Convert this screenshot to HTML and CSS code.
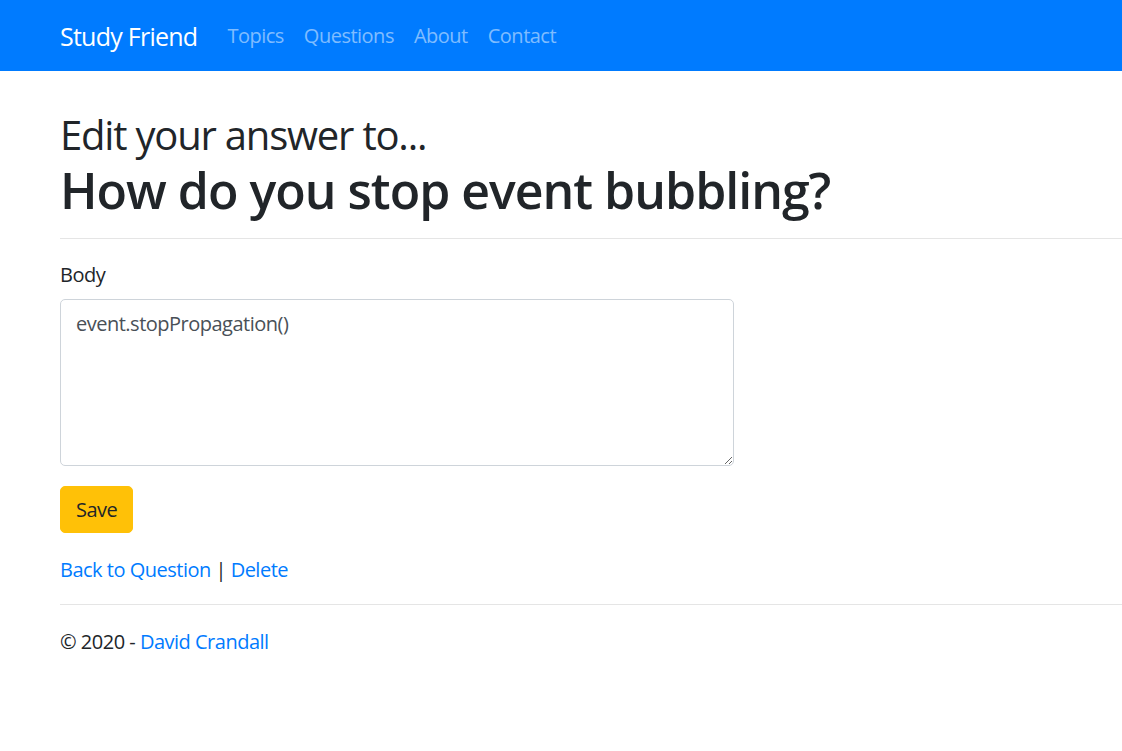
FILE: index.html
```html
<!DOCTYPE html>
<html lang="en">
<head>
<meta charset="utf-8">
<title>Edit answer - Study Friend</title>
<link rel="stylesheet" href="styles.css">
</head>
<body>
<header class="navbar">
  <a class="brand" href="#">Study Friend</a>
  <nav class="nav">
    <a class="nav-link" href="#">Topics</a>
    <a class="nav-link" href="#">Questions</a>
    <a class="nav-link" href="#">About</a>
    <a class="nav-link" href="#">Contact</a>
  </nav>
</header>
<main class="container">
  <h2 class="subtitle">Edit your answer to...</h2>
  <h1 class="title">How do you stop event bubbling?</h1>
  <hr class="rule">
  <form class="form">
    <div class="form-group">
      <label class="label" for="body">Body</label>
      <textarea id="body" class="textarea">event.stopPropagation()</textarea>
    </div>
    <button type="button" class="btn-save">Save</button>
  </form>
  <p class="links"><a href="#">Back to Question</a> | <a href="#">Delete</a></p>
  <hr class="rule rule-footer">
  <footer class="footer">© 2020 - <a href="#">David Crandall</a></footer>
</main>
</body>
</html>
```

FILE: styles.css
```css
* { box-sizing: border-box; }
html, body {
  margin: 0;
  padding: 0;
  background: #fff;
}
body {
  font-family: "Open Sans", "Noto Sans", sans-serif;
  font-size: 20px;
  line-height: 30px;
  color: #212529;
  letter-spacing: -0.5px;
}
a { color: #007bff; text-decoration: none; }

.navbar {
  height: 71px;
  background: #007bff;
  display: flex;
  align-items: center;
  padding: 0 60px;
}
.brand {
  color: #fff;
  font-size: 25px;
  line-height: 30px;
  margin-right: 20px;
  letter-spacing: -0.75px;
}
.nav { display: flex; }
.nav-link {
  color: rgba(255,255,255,.5);
  padding: 0 10px;
  font-size: 20px;
}

.container {
  padding: 40px 0 40px 60px;
}
.subtitle {
  margin: 0;
  font-size: 40px;
  line-height: 48px;
  font-weight: 400;
  letter-spacing: -1.2px;
}
.title {
  margin: 1px 0 0;
  font-size: 50px;
  line-height: 60px;
  font-weight: 600;
  letter-spacing: -1px;
}
.rule {
  margin: 18px 0 21px;
  border: 0;
  border-top: 1px solid rgba(0,0,0,.1);
}
.rule-footer { margin: 19px 0 22px; }
.form-group { margin-bottom: 20px; }
.label {
  display: block;
  margin-bottom: 9px;
}
.textarea {
  display: block;
  width: 674px;
  height: 167px;
  padding: 9px 15px;
  border: 1px solid #ced4da;
  border-radius: 5px;
  font-family: inherit;
  font-size: 20px;
  line-height: 30px;
  letter-spacing: -0.5px;
  color: #495057;
  resize: vertical;
}
.btn-save {
  display: block;
  height: 47px;
  padding: 0 15px;
  border: 1px solid #ffc107;
  border-radius: 5px;
  background: #ffc107;
  color: #212529;
  font-family: inherit;
  font-size: 20px;
  line-height: 30px;
  letter-spacing: -0.5px;
}
.links { margin: 22px 0 0; }
```
